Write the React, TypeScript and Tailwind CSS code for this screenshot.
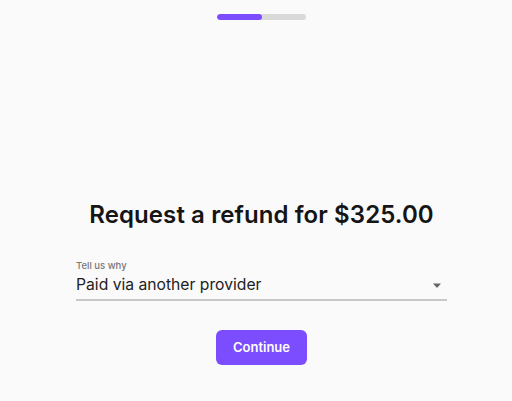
export default function App() {
  return (
    <div
      className="flex h-[401px] w-full flex-col items-center bg-[#fafafa] pl-[11px]"
      style={{ fontFamily: 'Inter, "Noto Sans", sans-serif' }}
    >
      <div className="mt-[14px] flex h-[6px] w-[89px] overflow-hidden rounded-full bg-[#d9d9d9]">
        <div className="h-full w-[45px] rounded-full bg-[#7c4dff]" />
      </div>

      <h1 className="mt-[179px] text-[24px] font-semibold leading-[32px] tracking-[0.1px] text-[#151515]">
        Request a refund for $325.00
      </h1>

      <div className="mt-[29px] w-[371px]">
        <label className="block text-[9.5px] font-medium leading-[12px] text-[#777]">Tell us why</label>
        <div className="flex items-center justify-between border-b-2 border-[#c8c8c8] pb-[3px] pt-[2px]">
          <span className="text-[15.7px] leading-[22px] text-[#222]">Paid via another provider</span>
          <svg width="8" height="5" viewBox="0 0 8 5" className="mr-[6px]">
            <path d="M0 0.5 H8 L4.5 4.5 H3.5 Z" fill="#666" />
          </svg>
        </div>
      </div>

      <button className="mt-[29px] h-[35px] w-[91px] rounded-[6px] bg-[#7c4dff] text-[13px] font-semibold text-white">
        Continue
      </button>
    </div>
  )
}
